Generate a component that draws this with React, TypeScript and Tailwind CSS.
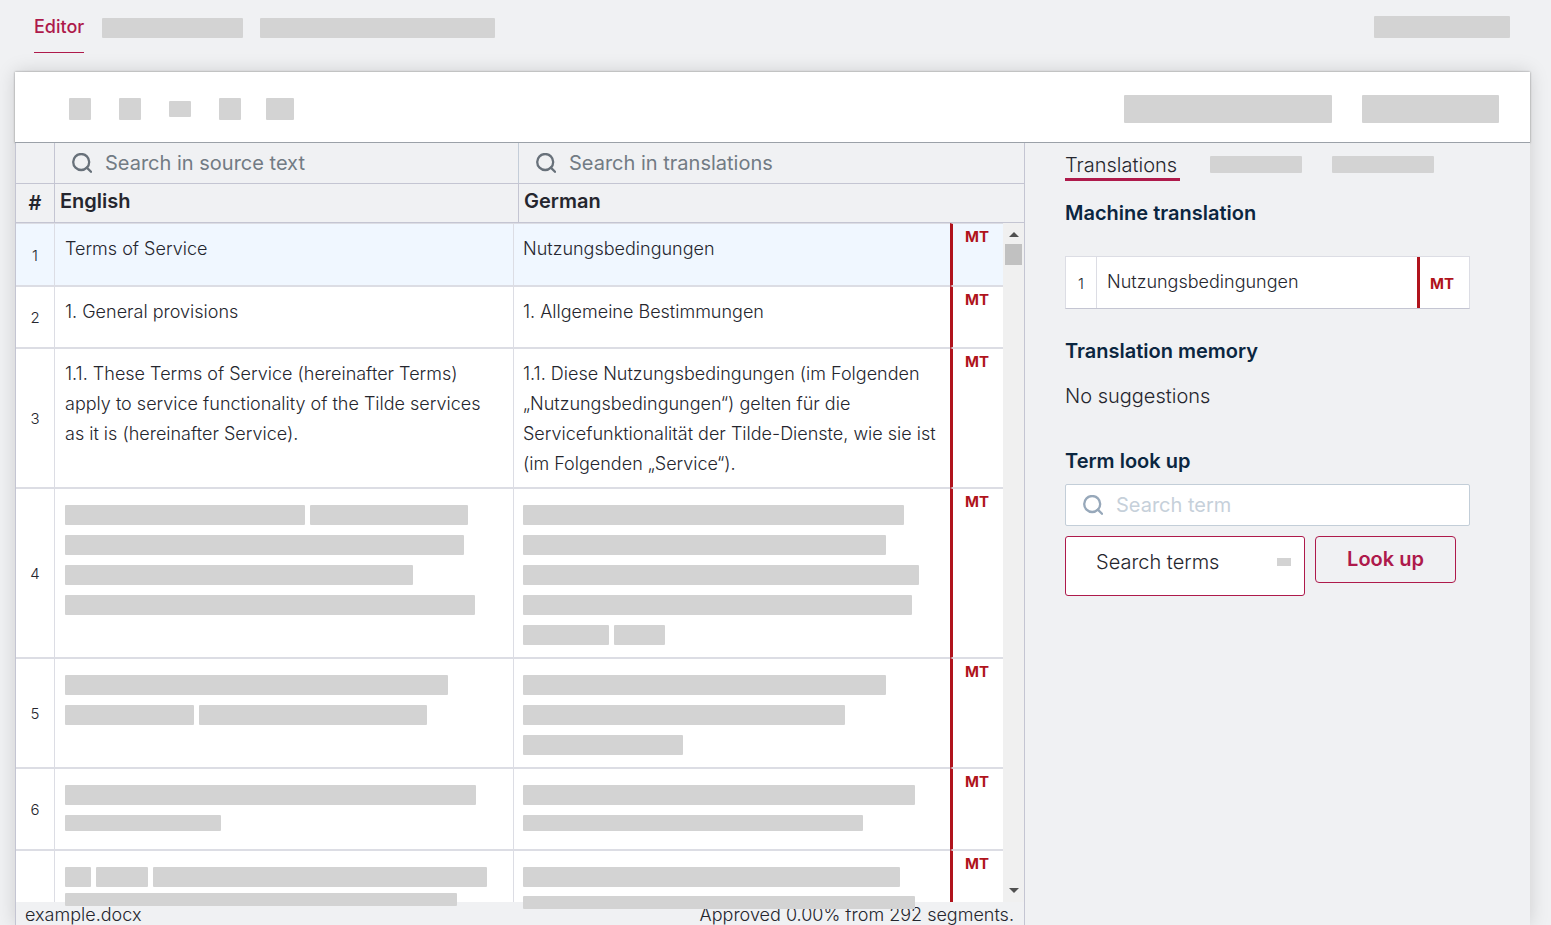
import React from "react";

type Line = string | string[];

interface Segment {
  id: number | null;
  source: string | Line[];
  target: string | Line[];
  row: string;
  cell?: string;
  sourceTail?: string;
  targetTail?: string;
}

const segments: Segment[] = [
  { id: 1, source: "Terms of Service", target: "Nutzungsbedingungen", row: "h-[63px] shrink-0 bg-[#f0f7ff]" },
  { id: 2, source: "1. General provisions", target: "1. Allgemeine Bestimmungen", row: "h-[62px] shrink-0 bg-white" },
  {
    id: 3,
    source:
      "1.1. These Terms of Service (hereinafter Terms) apply to service functionality of the Tilde services as it is (hereinafter Service).",
    target:
      "1.1. Diese Nutzungsbedingungen (im Folgenden „Nutzungsbedingungen“) gelten für die Servicefunktionalität der Tilde-Dienste, wie sie ist (im Folgenden „Service“).",
    row: "min-h-[62px] shrink-0 bg-white",
  },
  {
    id: 4,
    source: [["w-[240px]", "w-[158px]"], "w-[399px]", "w-[348px]", "w-[410px]"],
    target: ["w-[381px]", "w-[363px]", "w-[396px]", "w-[389px]", ["w-[86px]", "w-[51px]"]],
    row: "min-h-[62px] shrink-0 bg-white",
  },
  {
    id: 5,
    source: ["w-[383px]", ["w-[129px]", "w-[228px]"]],
    target: ["w-[363px]", "w-[322px]", "w-[160px]"],
    row: "min-h-[62px] shrink-0 bg-white",
  },
  {
    id: 6,
    source: ["w-[411px]", "w-[156px]"],
    target: ["w-[392px]", "w-[340px]"],
    row: "h-[82px] shrink-0 bg-white",
    sourceTail: "mt-1.5 h-4",
    targetTail: "mt-1.5 h-4",
  },
  {
    id: null,
    source: [["w-[26px]", "w-[52px]", "w-[334px]"], "w-[392px]"],
    target: ["w-[377px]", "w-[392px]"],
    row: "h-0 min-h-0 grow grid-rows-[minmax(0,1fr)] bg-white",
    cell: "relative z-10",
    sourceTail: "mt-0.5 h-[13px]",
    targetTail: "mt-[5px] h-[13px]",
  },
];

function SearchIcon() {
  return (
    <svg viewBox="0 0 20 20" className="size-5 shrink-0" fill="none" stroke="currentColor" strokeWidth="2.3" aria-hidden="true">
      <circle cx="9.2" cy="9" r="8" />
      <path d="M14.8 14.6l4.2 4.2" strokeLinecap="round" />
    </svg>
  );
}

function Bar({ className }: { className: string }) {
  return <span className={`block shrink-0 rounded-[1px] bg-[#d3d3d3] ${className}`} />;
}

function CellContent({ value, tail }: { value: string | Line[]; tail?: string }) {
  if (typeof value === "string") return <>{value}</>;
  return (
    <>
      {value.map((line, i) => {
        const compact = i === 1 && tail !== undefined;
        return (
          <span key={i} className={`flex items-center gap-[5px] ${compact ? tail : "h-[30px] pt-0.5"}`}>
            {(Array.isArray(line) ? line : [line]).map((w, j) => (
              <Bar key={j} className={`${w} ${compact ? "h-full" : "h-5"}`} />
            ))}
          </span>
        );
      })}
    </>
  );
}

function SegmentRow({ segment }: { segment: Segment }) {
  const cell = segment.cell ?? "";
  return (
    <tr className={`grid grid-cols-[39px_459fr_436fr_53px] last:*:border-b-0 ${segment.row}`}>
      <td className="flex items-center justify-center border-y border-r border-[#dcdde4] pt-0.5 text-[15px] leading-5">
        {segment.id}
      </td>
      <td className={`border-y border-r border-[#dcdde4] pt-2.5 pr-3 pb-2 pl-2.5 text-[18px] leading-[30px] ${cell}`}>
        <CellContent value={segment.source} tail={segment.sourceTail} />
      </td>
      <td className={`border-y border-[#dcdde4] pt-2.5 pr-2.5 pb-2 pl-[9px] text-[18px] leading-[30px] ${cell}`}>
        <CellContent value={segment.target} tail={segment.targetTail} />
      </td>
      <td className="border-y border-l-[3px] border-y-[#dcdde4] border-l-[#b0131c] pt-1 pl-3 text-[15px] leading-[18px] font-bold text-[#b0131c]">
        MT
      </td>
    </tr>
  );
}

function SegmentPane() {
  return (
    <section className="flex w-2/3 flex-col border-x border-[#c4c5d2]">
      <div className="grid h-[41px] shrink-0 grid-cols-[39px_464fr_505fr] border-b border-[#c4c5d2] text-[20px]">
        <div className="border-r border-[#c4c5d2]" />
        <label className="flex items-center gap-[13px] border-r border-[#c4cdd8] pl-[17px] text-[#68717a]">
          <SearchIcon />
          <input
            type="text"
            aria-label="Search in source text"
            placeholder="Search in source text"
            className="min-w-0 flex-1 bg-transparent font-normal outline-none placeholder:text-[#727b84]"
          />
        </label>
        <label className="flex items-center gap-[13px] pl-[17px] text-[#68717a]">
          <SearchIcon />
          <input
            type="text"
            aria-label="Search in translations"
            placeholder="Search in translations"
            className="min-w-0 flex-1 bg-transparent font-normal outline-none placeholder:text-[#727b84]"
          />
        </label>
      </div>
      <table className="flex min-h-0 flex-1 flex-col">
        <thead className="block shrink-0">
          <tr className="grid h-[39px] grid-cols-[39px_464fr_505fr] border-b border-[#c4c5d2] text-left text-[20px] leading-[34px] text-[#25262e]">
            <th className="border-r border-[#c4c5d2] pt-0.5 text-center font-semibold">#</th>
            <th className="border-r border-[#c4c5d2] pl-[5px] font-semibold">English</th>
            <th className="pl-[5px] font-semibold">German</th>
          </tr>
        </thead>
        <tbody className="mr-[21px] flex min-h-0 flex-1 flex-col">
          {segments.map((s, i) => (
            <SegmentRow key={i} segment={s} />
          ))}
        </tbody>
      </table>
      <footer className="flex h-[23px] shrink-0 items-center justify-between bg-[#f0f1f3] pr-2.5 pl-[9px] text-[18px] leading-[26px]">
        <span className="pt-[3px]">example.docx</span>
        <span className="pt-[3px]">Approved 0.00% from 292 segments.</span>
      </footer>
    </section>
  );
}

function ScrollTrack() {
  return (
    <div aria-hidden="true" className="absolute top-20 right-0 bottom-[23px] mr-px flex w-[21px] flex-col items-center bg-[#f0f0f0]">
      <svg viewBox="0 0 10 5" className="mt-[9px] h-[5px] w-2.5 fill-[#505050]">
        <path d="M0 5L5 0l5 5z" />
      </svg>
      <div className="mt-[7px] h-[21px] w-[17px] bg-[#c1c1c1]" />
      <svg viewBox="0 0 10 5" className="mt-auto mb-[9px] h-[5px] w-2.5 fill-[#505050]">
        <path d="M0 0h10L5 5z" />
      </svg>
    </div>
  );
}

function SuggestionPane() {
  return (
    <aside className="w-1/3 pr-[60px] pl-10 text-[20px]">
      <nav className="flex h-[38px] gap-[30px]">
        <a href="#translations" className="min-w-[115px] border-b-[3px] border-[#ae1a4b] pt-[9px] leading-[26px]">
          Translations
        </a>
        <Bar className="mt-[13px] h-[17px] w-[92px]" />
        <Bar className="mt-[13px] h-[17px] w-[102px]" />
      </nav>
      <h2 className="mt-[17px] leading-[30px] font-semibold text-[#0b2640]">Machine translation</h2>
      <table className="mt-7 block border border-[#dcdde4] border-b-[#c4c5d2] bg-white">
        <tbody className="block">
          <tr className="grid h-[51px] grid-cols-[31px_1fr_52px]">
            <td className="border-r border-[#dcdde4] pt-4 text-center text-[15px] leading-[22px]">1</td>
            <td className="pt-2.5 pl-2.5 text-[18px] leading-[30px]">Nutzungsbedingungen</td>
            <td className="border-l-[3px] border-[#b0131c] pt-4 pl-2.5 text-[15px] leading-[22px] font-bold text-[#b0131c]">MT</td>
          </tr>
        </tbody>
      </table>
      <h2 className="mt-[27px] leading-[30px] font-semibold text-[#0b2640]">Translation memory</h2>
      <p className="mt-[15px] leading-[30px]">No suggestions</p>
      <h2 className="mt-[35px] leading-[30px] font-semibold text-[#0b2640]">Term look up</h2>
      <label className="mt-2 flex h-[42px] items-center gap-[13px] rounded-[2px] border border-[#c3ced8] bg-white pl-[17px] text-[#97a8ba]">
        <SearchIcon />
        <input
          type="text"
          aria-label="Search term"
          placeholder="Search term"
          className="min-w-0 flex-1 bg-transparent font-normal outline-none placeholder:text-[#c6d0da]"
        />
      </label>
      <div className="mt-2.5 flex items-start gap-2.5">
        <div className="relative">
          <select
            aria-label="Search terms"
            className="h-[60px] w-60 appearance-none rounded-[3px] border border-[#ae1a4b] bg-white pb-2 pl-[30px] font-light outline-none"
          >
            <option>Search terms</option>
          </select>
          <span className="pointer-events-none absolute top-[22px] right-3.5 h-2 w-3.5 bg-[#d3d3d3]" />
        </div>
        <button
          type="button"
          className="h-[47px] w-[141px] rounded-[4px] border border-[#ae1a4b] pb-0.5 font-semibold text-[#ae1a4b]"
        >
          Look up
        </button>
      </div>
    </aside>
  );
}

export default function App() {
  return (
    <div className="flex h-screen flex-col overflow-hidden bg-[#f0f1f3] font-['Inter',sans-serif] font-light text-[#25262e]">
      <header className="flex h-[72px] shrink-0 items-start justify-between pr-[41px] pl-[34px]">
        <nav className="flex">
          <a href="#editor" className="h-[53px] border-b border-[#ae1a4b] pt-3 text-[18px] leading-[30px] font-medium text-[#ae1a4b]">
            Editor
          </a>
          <Bar className="mt-[18px] ml-[18px] h-5 w-[141px]" />
          <Bar className="mt-[18px] ml-[17px] h-5 w-[235px]" />
        </nav>
        <Bar className="mt-4 h-[22px] w-[136px]" />
      </header>
      <main className="mr-[21px] ml-[15px] flex min-h-0 flex-1 flex-col shadow-[0_0_18px_rgba(0,0,0,0.15)]">
        <div className="relative flex h-[71px] shrink-0 items-center justify-between border-b border-[#9ba1a8] bg-white pt-1 pr-[31px] pl-10 shadow-[0_0_2px_rgba(0,0,0,0.4)]">
          <div className="flex items-center">
            <div className="flex w-[50px] justify-center"><Bar className="size-[22px]" /></div>
            <div className="flex w-[50px] justify-center"><Bar className="size-[22px]" /></div>
            <div className="flex w-[50px] justify-center"><Bar className="h-4 w-[22px]" /></div>
            <div className="flex w-[50px] justify-center"><Bar className="size-[22px]" /></div>
            <div className="flex w-[50px] justify-center"><Bar className="h-[22px] w-7" /></div>
          </div>
          <div className="flex gap-[30px]">
            <Bar className="h-7 w-[208px]" />
            <Bar className="h-7 w-[137px]" />
          </div>
        </div>
        <div className="relative flex min-h-0 flex-1 bg-[#f0f1f3]">
          <SegmentPane />
          <div className="pointer-events-none absolute inset-y-0 left-0 w-2/3">
            <ScrollTrack />
          </div>
          <SuggestionPane />
        </div>
      </main>
    </div>
  );
}
